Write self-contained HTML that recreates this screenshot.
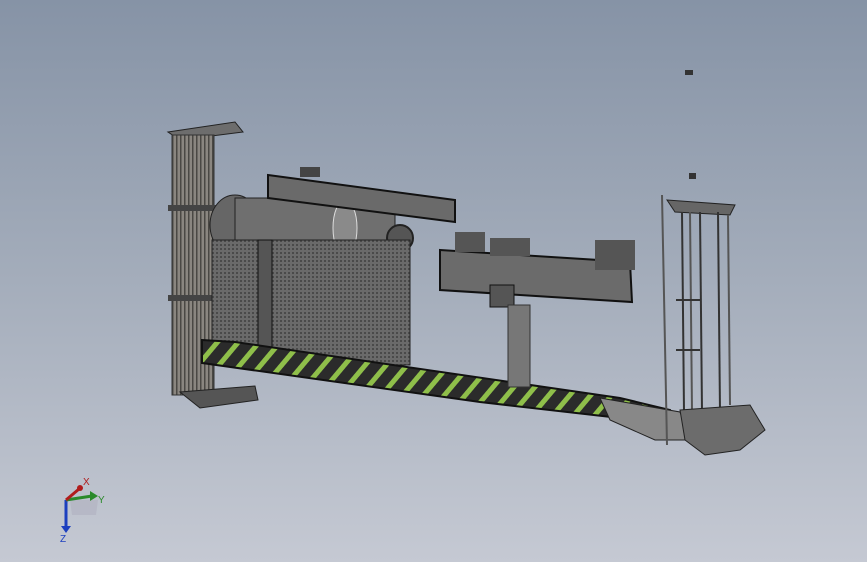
<!DOCTYPE html>
<html><head><meta charset="utf-8"><style>
html,body{margin:0;padding:0;width:867px;height:562px;overflow:hidden;}
body{background:linear-gradient(180deg,#8693a6 0%,#a4adbb 50%,#c5c9d3 100%);}
svg{position:absolute;left:0;top:0;}
</style></head><body>
<svg width="867" height="562" viewBox="0 0 867 562" xmlns="http://www.w3.org/2000/svg">
<defs>
<pattern id="vs" width="4" height="10" patternUnits="userSpaceOnUse"><rect width="4" height="10" fill="#8a8680"/><rect width="1.5" height="10" fill="#4a4844"/></pattern>
<pattern id="hz" width="16" height="16" patternUnits="userSpaceOnUse" patternTransform="rotate(40)"><rect width="16" height="16" fill="#2b2b2b"/><rect width="5" height="16" fill="#8fbf4a"/></pattern>
<pattern id="gr" width="4" height="4" patternUnits="userSpaceOnUse"><rect width="4" height="4" fill="#6a6a6a"/><rect width="2" height="2" fill="#4a4a4a"/></pattern>
</defs>
<path d="M168 132 L235 122 L243 132 L180 140 Z" fill="#6d6d6d" stroke="#222"/>
<rect x="172" y="135" width="42" height="260" fill="url(#vs)" stroke="#333"/>
<rect x="168" y="205" width="50" height="6" fill="#444"/>
<rect x="168" y="295" width="50" height="6" fill="#444"/>
<path d="M180 392 L255 386 L258 400 L200 408 Z" fill="#555" stroke="#222"/>
<ellipse cx="235" cy="225" rx="25" ry="30" fill="#666" stroke="#222"/>
<rect x="235" y="198" width="160" height="58" fill="#6f6f6f" stroke="#222"/>
<ellipse cx="345" cy="228" rx="12" ry="28" fill="#8a8a8a" stroke="#ddd"/>
<circle cx="400" cy="238" r="13" fill="#555" stroke="#222" stroke-width="2"/>
<path d="M268 175 L455 200 L455 222 L268 198 Z" fill="#6a6a6a" stroke="#111" stroke-width="2"/>
<rect x="300" y="167" width="20" height="10" fill="#444"/>
<rect x="212" y="240" width="198" height="125" fill="url(#gr)" stroke="#222"/>
<rect x="258" y="240" width="14" height="110" fill="#555" stroke="#111"/>
<path d="M202 340 L235 342 L620 398 L670 410 L670 428 L620 418 L480 402 L202 363 Z" fill="url(#hz)" stroke="#111" stroke-width="2"/>
<path d="M600 398 L680 412 L690 440 L655 440 L610 420 Z" fill="#888" stroke="#222"/>
<path d="M440 250 L630 262 L632 302 L440 290 Z" fill="#6b6b6b" stroke="#111" stroke-width="2"/>
<rect x="455" y="232" width="30" height="20" fill="#555"/>
<rect x="490" y="238" width="40" height="18" fill="#555"/>
<rect x="595" y="240" width="40" height="30" fill="#555"/>
<rect x="490" y="285" width="24" height="22" fill="#555" stroke="#111"/>
<rect x="508" y="305" width="22" height="82" fill="#777" stroke="#333"/>
<path d="M667 200 L735 205 L730 215 L675 212 Z" fill="#666" stroke="#222"/>
<g stroke="#333" stroke-width="2" fill="none">
<line x1="682" y1="212" x2="684" y2="412"/><line x1="700" y1="212" x2="702" y2="412"/><line x1="718" y1="212" x2="720" y2="412"/>
<line x1="690" y1="212" x2="692" y2="412" stroke="#555"/><line x1="728" y1="215" x2="730" y2="405" stroke="#555"/>
<line x1="676" y1="300" x2="700" y2="300"/><line x1="676" y1="350" x2="700" y2="350"/>
</g>
<line x1="662" y1="195" x2="667" y2="445" stroke="#555" stroke-width="2"/>
<path d="M680 410 L750 405 L765 430 L740 450 L705 455 L685 440 Z" fill="#6c6c6c" stroke="#222"/>
<rect x="685" y="70" width="8" height="5" fill="#333"/>
<rect x="689" y="173" width="7" height="6" fill="#333"/>
<path d="M70 500 L98 500 L96 515 L72 515 Z" fill="#b0b0c0" opacity=".6"/>
<line x1="66" y1="500" x2="66" y2="528" stroke="#1c3fbf" stroke-width="3"/>
<polygon points="61,526 71,526 66,533" fill="#1c3fbf"/>
<line x1="66" y1="500" x2="92" y2="496" stroke="#2b8a2b" stroke-width="3"/>
<polygon points="90,491 98,496 90,501" fill="#2b8a2b"/>
<line x1="66" y1="500" x2="79" y2="489" stroke="#b01c1c" stroke-width="3"/>
<circle cx="80" cy="488" r="3" fill="#b01c1c"/>
<text x="83" y="485" font-family="Liberation Sans,sans-serif" font-size="10" fill="#b01c1c">X</text>
<text x="98" y="503" font-family="Liberation Sans,sans-serif" font-size="10" fill="#2b8a2b">Y</text>
<text x="60" y="542" font-family="Liberation Sans,sans-serif" font-size="10" fill="#1c3fbf">Z</text>
</svg>
</body></html>
